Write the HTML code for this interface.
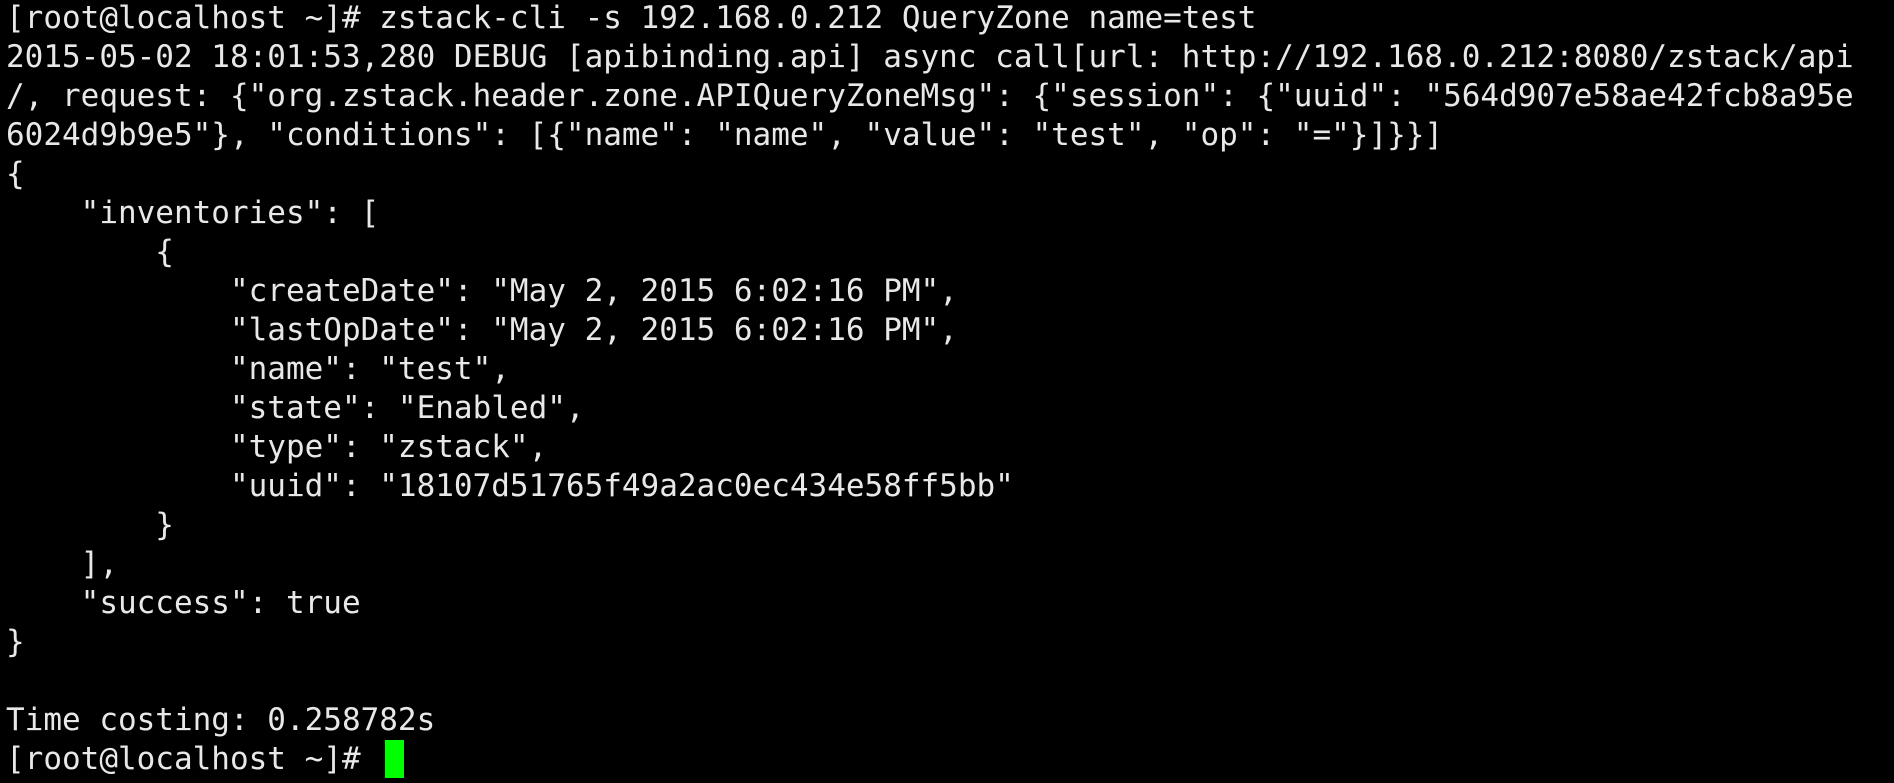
<!DOCTYPE html>
<html><head><meta charset="utf-8"><style>
html,body{margin:0;padding:0;background:#000;width:1894px;height:783px;overflow:hidden}
pre{margin:0;position:absolute;left:6px;top:-1px;font-family:"DejaVu Sans Mono","Liberation Mono",monospace;font-size:31px;line-height:39px;color:#e8e8e8;white-space:pre}
.cur{position:absolute;left:385px;top:740px;width:19px;height:38px;background:#00ff00}
</style></head><body>
<pre>[root@localhost ~]# zstack-cli -s 192.168.0.212 QueryZone name=test
2015-05-02 18:01:53,280 DEBUG [apibinding.api] async call[url: http://192.168.0.212:8080/zstack/api
/, request: {"org.zstack.header.zone.APIQueryZoneMsg": {"session": {"uuid": "564d907e58ae42fcb8a95e
6024d9b9e5"}, "conditions": [{"name": "name", "value": "test", "op": "="}]}}]
{
    "inventories": [
        {
            "createDate": "May 2, 2015 6:02:16 PM",
            "lastOpDate": "May 2, 2015 6:02:16 PM",
            "name": "test",
            "state": "Enabled",
            "type": "zstack",
            "uuid": "18107d51765f49a2ac0ec434e58ff5bb"
        }
    ],
    "success": true
}

Time costing: 0.258782s
[root@localhost ~]# </pre>
<div class="cur"></div>
</body></html>
